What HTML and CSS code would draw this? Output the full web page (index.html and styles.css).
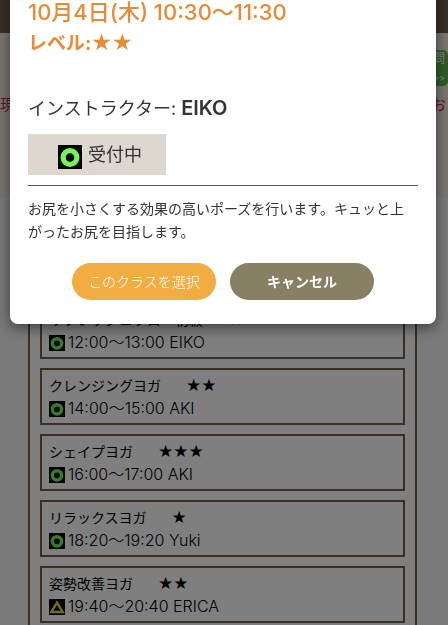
FILE: index.html
```html
<!DOCTYPE html>
<html lang="ja">
<head>
<meta charset="utf-8">
<meta name="viewport" content="width=device-width, initial-scale=1">
<title>レッスン予約</title>
<link rel="stylesheet" href="styles.css">
</head>
<body>
<svg class="defs" aria-hidden="true">
  <symbol id="open" viewBox="0 0 24 24"><rect width="24" height="24" fill="#000"/><circle cx="12" cy="12.5" r="6.9" fill="none" stroke="#72f55b" stroke-width="5.2"/></symbol>
  <symbol id="few" viewBox="0 0 24 24"><rect width="24" height="24" fill="#000"/><path d="M12 5.5 20.5 19.5H3.5Z" fill="none" stroke="#e8d84c" stroke-width="3.6"/></symbol>
</svg>
<div class="page">
  <header class="bar"></header>
  <section class="intro">
    <a class="ask" href="#">質問<br><small>&gt;&gt;</small></a>
    <p class="notice"><span>現</span><span>お</span></p>
  </section>
  <main class="schedule">
    <article class="lesson"><h3>リフレッシュフロー初級<span class="stars">★</span></h3><p><svg class="mark"><use href="#open"/></svg>12:00〜13:00 EIKO</p></article>
    <article class="lesson"><h3>クレンジングヨガ<span class="stars">★★</span></h3><p><svg class="mark"><use href="#open"/></svg>14:00〜15:00 AKI</p></article>
    <article class="lesson"><h3>シェイプヨガ<span class="stars">★★★</span></h3><p><svg class="mark"><use href="#open"/></svg>16:00〜17:00 AKI</p></article>
    <article class="lesson"><h3>リラックスヨガ<span class="stars">★</span></h3><p><svg class="mark"><use href="#open"/></svg>18:20〜19:20 Yuki</p></article>
    <article class="lesson"><h3>姿勢改善ヨガ<span class="stars">★★</span></h3><p><svg class="mark"><use href="#few"/></svg>19:40〜20:40 ERICA</p></article>
  </main>
</div>
<div class="overlay">
  <div class="modal" role="dialog" aria-modal="true" aria-labelledby="when">
    <h2 id="when">10月4日(木) 10:30〜11:30</h2>
    <p class="level">レベル:<span class="level-stars">★★</span></p>
    <p class="teacher">インストラクター: <strong>EIKO</strong></p>
    <p class="status"><svg class="mark-large"><use href="#open"/></svg>受付中</p>
    <hr>
    <p class="about">お尻を小さくする効果の高いポーズを行います。キュッと上がったお尻を目指します。</p>
    <div class="actions">
      <button class="select" type="button">このクラスを選択</button>
      <button class="cancel" type="button">キャンセル</button>
    </div>
  </div>
</div>
</body>
</html>
```
FILE: styles.css
```css
* { box-sizing: border-box; }
body {
  margin: 0;
  background: #f4f4f4;
  color: #000;
  font: 14px/24px Inter, "Noto Sans CJK JP", sans-serif;
}
h2, h3, p { margin: 0; font-size: inherit; font-weight: inherit; }
.defs { display: none; }
.page { height: 100vh; overflow: hidden; }
.bar { height: 33px; background: #745e4a; }
.intro { height: 164px; padding-top: 17px; background: #f0ebe5; }
.ask {
  display: block;
  width: 56px;
  height: 36px;
  margin-left: auto;
  padding-right: 3px;
  border-radius: 5px;
  background: #5cb850;
  color: #fff;
  font-size: 12px;
  line-height: 18px;
  text-align: right;
  text-decoration: none;
}
.ask small { font-size: 9px; }
.notice {
  display: flex;
  justify-content: space-between;
  margin-top: 7px;
  padding-right: 2px;
  color: #d02040;
  font-size: 15px;
}
.schedule {
  margin: 94px 31px 0 28px;
  padding: 9px 10px;
  border: 2px solid #745e4a;
  background: #fff;
}
.lesson {
  height: 57px;
  margin-bottom: 9px;
  padding: 4px 7px;
  border: 2px solid #745e4a;
}
.lesson h3, .lesson p { display: flex; align-items: center; line-height: 23px; }
.lesson p { font-size: 16px; font-weight: 300; }
.stars, .level-stars { font-family: "DejaVu Sans", sans-serif; }
.stars { margin-left: 25px; font-size: 17px; }
.mark { width: 16px; height: 16px; margin-right: 3px; }
.overlay { position: fixed; inset: 0; background: rgba(0, 0, 0, .5); overflow: hidden; }
.modal {
  margin: -20px 12px 0 10px;
  padding: 17px 18px 24px;
  border-radius: 8px;
  background: #fff;
  color: #333;
  box-shadow: 0 4px 14px rgba(0, 0, 0, .5);
}
.modal h2, .level { height: 30px; color: #e98a38; font-weight: 500; line-height: 30px; }
.modal h2 { font-size: 22px; }
.level { font-size: 19px; font-weight: 700; }
.level-stars { font-size: 23px; font-weight: 400; }
.teacher { margin-top: 38px; font-size: 18px; line-height: 27px; }
.teacher strong { font-size: 20px; font-weight: 600; }
.status {
  display: flex;
  align-items: center;
  justify-content: center;
  gap: 6px;
  width: 138px;
  height: 41px;
  margin-top: 12px;
  padding-left: 6px;
  background: #ded7d0;
  font-size: 18px;
}
.mark-large { width: 24px; height: 24px; margin-top: 4px; }
hr { margin: 10px 0 11px; border: 0; border-top: 1px solid #555; }
.about { padding-right: 8px; line-height: 23px; }
.actions { display: flex; justify-content: center; gap: 14px; margin-top: 20px; }
button {
  width: 144px;
  height: 37px;
  padding: 0;
  border: 0;
  border-radius: 19px;
  color: #fff;
  font: inherit;
}
.select { background: #f2ad42; font-weight: 300; }
.cancel { background: #888064; font-weight: 700; }
```
